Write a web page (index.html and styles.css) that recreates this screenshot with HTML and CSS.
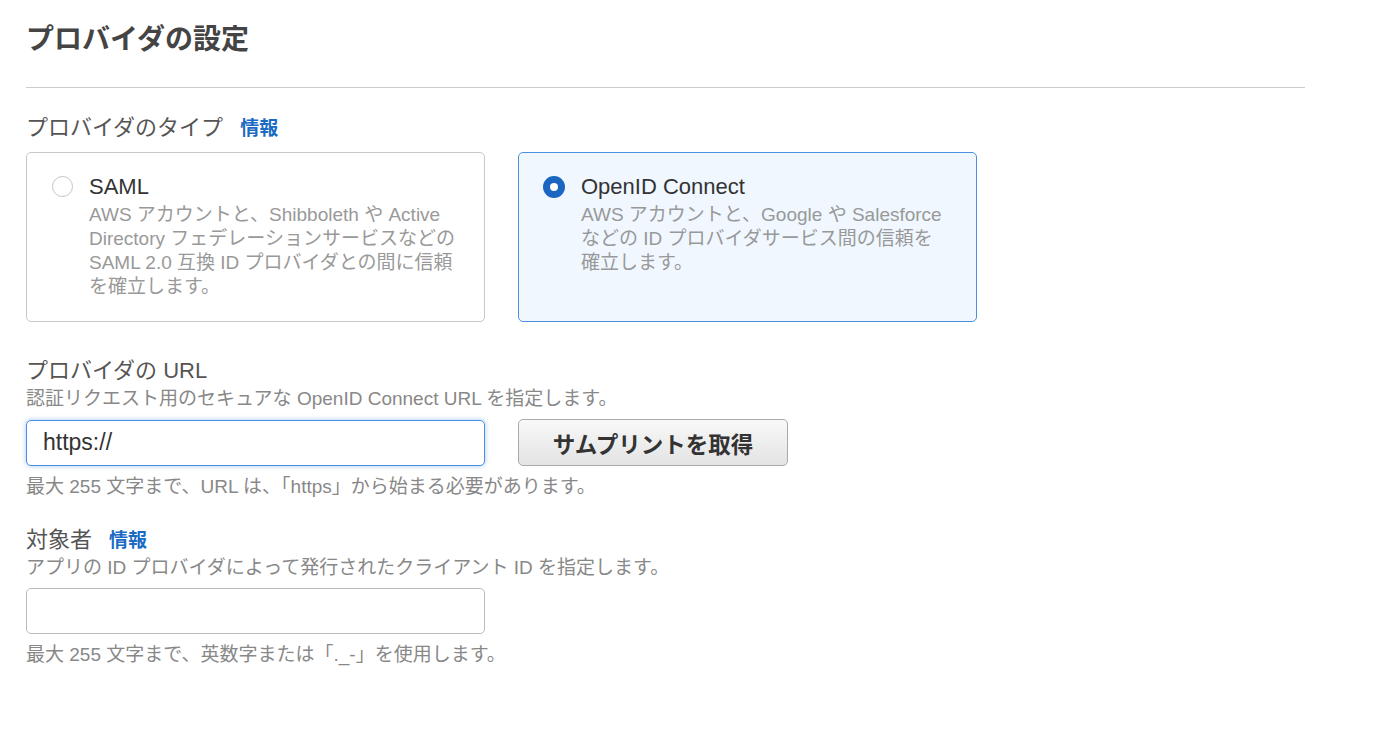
FILE: index.html
```html
<!DOCTYPE html>
<html lang="ja">

<head>
    <meta charset="UTF-8">
    <meta name="viewport" content="width=device-width, initial-scale=1.0">
    <title>プロバイダの設定</title>
    <link rel="stylesheet" href="styles.css">
</head>

<body>
    <div id="provider">
        <h2 class="page-title">プロバイダの設定</h2>
        <hr class="divider">

        <div class="field-label">プロバイダのタイプ <a class="info" href="#">情報</a></div>
        <div class="type-cards">
            <label class="type-card">
                <span class="radio"></span>
                <span class="card-text">
                    <span class="card-title">SAML</span>
                    <span class="card-desc">AWS アカウントと、Shibboleth や Active Directory フェデレーションサービスなどの SAML 2.0 互換 ID プロバイダとの間に信頼を確立します。</span>
                </span>
            </label>
            <label class="type-card selected">
                <span class="radio checked"></span>
                <span class="card-text">
                    <span class="card-title">OpenID Connect</span>
                    <span class="card-desc">AWS アカウントと、Google や Salesforce などの ID プロバイダサービス間の信頼を確立します。</span>
                </span>
            </label>
        </div>

        <div class="field-label url-label">プロバイダの URL</div>
        <div class="field-desc">認証リクエスト用のセキュアな OpenID Connect URL を指定します。</div>
        <div class="input-row">
            <input type="text" class="text-input focused" value="https://">
            <button class="thumb-btn">サムプリントを取得</button>
        </div>
        <div class="field-hint">最大 255 文字まで、URL は、「https」から始まる必要があります。</div>

        <div class="field-label audience-label">対象者 <a class="info" href="#">情報</a></div>
        <div class="field-desc">アプリの ID プロバイダによって発行されたクライアント ID を指定します。</div>
        <div class="input-row">
            <input type="text" class="text-input">
        </div>
        <div class="field-hint">最大 255 文字まで、英数字または「._-」を使用します。</div>
    </div>
</body>

</html>
```

FILE: styles.css
```css
body {
    margin: 0;
    background-color: #fff;
    font-family: "Liberation Sans", "Noto Sans CJK JP", sans-serif;
    color: #444;
}

#provider {
    width: 1279px;
    padding-left: 26px;
}

.page-title {
    margin: 22px 0 0;
    font-size: 28px;
    line-height: 36px;
    font-weight: bold;
    color: #444;
}

.divider {
    margin: 29px 0 0;
    border: none;
    border-top: 1px solid #cccccc;
}

.field-label {
    display: flex;
    align-items: baseline;
    height: 28px;
    margin-top: 26px;
    font-size: 22px;
    line-height: 28px;
    color: #555;
}

.info {
    margin-left: 17px;
    font-size: 19px;
    font-weight: bold;
    color: #1a6bc4;
    text-decoration: none;
}

.type-cards {
    display: flex;
    gap: 33px;
    margin-top: 10px;
}

.type-card {
    display: flex;
    width: 459px;
    height: 170px;
    box-sizing: border-box;
    padding: 20px 0 0 25px;
    border: 1px solid #c8c8c8;
    border-radius: 5px;
    background-color: #fff;
}

.type-card.selected {
    border-color: #4a90e2;
    background-color: #f0f7ff;
}

.radio {
    flex: none;
    width: 21px;
    height: 21px;
    margin-top: 3px;
    box-sizing: border-box;
    border: 1.5px solid #c4c4c4;
    border-radius: 50%;
    background-color: #fff;
}

.radio.checked {
    width: 22px;
    height: 22px;
    margin-top: 3px;
    margin-left: -1px;
    border: 7px solid #1a66c0;
}

.card-text {
    display: flex;
    flex-direction: column;
    width: 369px;
    margin-left: 16px;
}

.card-title {
    font-size: 22px;
    line-height: 28px;
    color: #333;
}

.card-desc {
    margin-top: 2px;
    font-size: 19px;
    line-height: 24px;
    color: #999;
}

.url-label {
    margin-top: 35px;
}

.audience-label {
    margin-top: 27px;
}

.field-desc {
    margin-top: 2px;
    font-size: 19px;
    line-height: 24px;
    color: #888;
}

.input-row {
    display: flex;
    align-items: center;
    gap: 33px;
    margin-top: 8px;
}

.text-input {
    width: 459px;
    height: 46px;
    box-sizing: border-box;
    padding: 0 16px;
    border: 1px solid #bbbbbb;
    border-radius: 5px;
    font-family: "Liberation Sans", "Noto Sans CJK JP", sans-serif;
    font-size: 23px;
    color: #333;
}

.text-input.focused {
    border-color: #4a90e2;
    box-shadow: 0 0 5px rgba(74, 144, 226, 0.5);
    outline: none;
}

.thumb-btn {
    width: 270px;
    height: 47px;
    padding: 0;
    border: 1px solid #aaaaaa;
    border-radius: 5px;
    background: linear-gradient(#f9f9f9, #e3e3e3);
    font-family: "Liberation Sans", "Noto Sans CJK JP", sans-serif;
    font-size: 22.5px;
    font-weight: bold;
    color: #333;
    cursor: pointer;
}

.field-hint {
    margin-top: 9px;
    font-size: 19px;
    line-height: 24px;
    color: #888;
}
```
